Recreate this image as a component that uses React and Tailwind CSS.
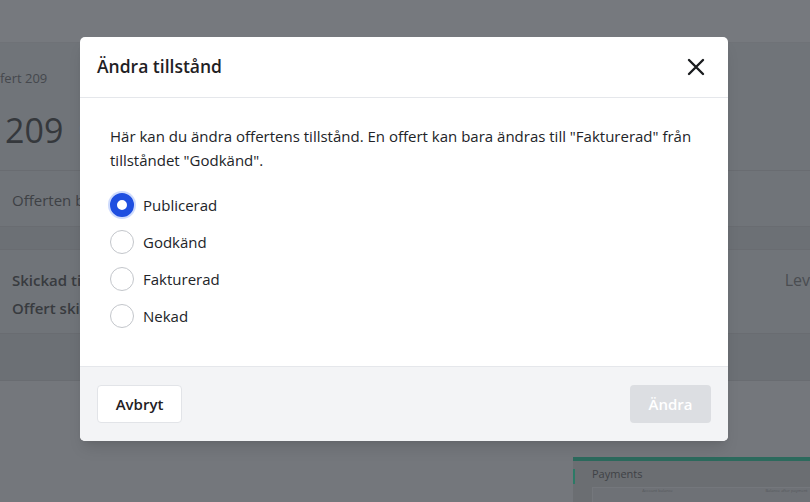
import React, { useState } from 'react';

const options = ['Publicerad', 'Godkänd', 'Fakturerad', 'Nekad'];

function Radio({ checked }) {
  return checked ? (
    <span className="w-6 h-6 rounded-full border-[7px] border-[#1f4fe0] bg-white shadow-[0_0_0_2px_rgba(59,110,246,0.25)] shrink-0" />
  ) : (
    <span className="w-6 h-6 rounded-full border-[1.5px] border-[#c3c6cb] bg-white shrink-0" />
  );
}

export default function App() {
  const [state, setState] = useState('Publicerad');

  return (
    <div className="relative w-[810px] h-[502px] overflow-hidden bg-[#74777c] font-['Open_Sans',sans-serif]">
      {/* dimmed page behind */}
      <div className="h-[43px] bg-[#76797e] border-b border-[#6f7277]" />
      <div className="bg-[#707479]">
        <div className="h-[128px] border-b border-[#696c71] pt-[26px]">
          <p className="w-[80px] overflow-hidden whitespace-nowrap text-[13px] text-[#45484d]">fert 209</p>
          <div className="flex items-center mt-[20px] ml-[5px] gap-4">
            <span className="text-[34px] leading-[42px] text-[#35383c]">209</span>
            <span className="w-6 h-6 rounded-full bg-[#6d7684]" />
          </div>
        </div>
        <div className="h-[56px] border-b border-[#696c71] flex items-center px-3 pt-[3px]">
          <span className="whitespace-nowrap text-[15px] text-[#3e4145]">Offerten b</span>
        </div>
        <div className="h-[23px] bg-[#6c7075] border-b border-[#696c71]" />
        <div className="h-[84px] border-b border-[#696c71] pt-[16px] pl-3 flex justify-between">
          <div className="flex flex-col whitespace-nowrap">
            <span className="text-[15px] leading-[28px] font-semibold text-[#383b3f]">Skickad ti</span>
            <span className="text-[15px] leading-[28px] font-semibold text-[#383b3f]">Offert ski</span>
          </div>
          <span className="whitespace-nowrap text-[16px] leading-[28px] text-[#4a4d51]">Lev</span>
        </div>
        <div className="h-[47px] bg-[#6c7075] border-b border-[#696c71]" />
      </div>
      <div className="bg-[#74777c] pt-[76px] pl-[573px]">
        <div className="w-[300px] h-[60px] bg-[#6b6e72] border-t-[4px] border-[#2c6a5d] flex">
          <span className="w-[2px] h-[15px] mt-[8px] bg-[#2c7a66]" />
          <div className="pl-[17px] pt-[5px]">
            <p className="text-[11px] text-[#3f4246]">Payments</p>
            <div className="mt-[4px] w-[260px] h-[20px] border border-[#74777c] bg-[#6e7176] flex text-[4px] text-[#55585c]">
              <span className="w-1/2 text-center">Account balance</span>
              <span className="w-1/2 text-center">Balance after payment</span>
            </div>
          </div>
        </div>
      </div>

      {/* modal */}
      <div className="absolute left-[80px] top-[37px] w-[648px] bg-white rounded-[5px] overflow-hidden shadow-lg">
        <div className="h-[61px] flex items-center justify-between px-[17px] border-b border-[#e5e7eb]">
          <h2 className="text-[17.5px] font-semibold text-[#1f2124] -mt-[1px]">Ändra tillstånd</h2>
          <button className="w-8 h-8 flex items-center justify-center mr-[-1px] text-[#1a1c1f]">
            <svg width="18" height="18" viewBox="0 0 18 18" fill="none" stroke="currentColor" strokeWidth="2.4" strokeLinecap="round">
              <path d="M2 2 L16 16 M16 2 L2 16" />
            </svg>
          </button>
        </div>
        <div className="px-[30px] pt-[26px] h-[269px] border-b border-[#e5e7eb]">
          <p className="text-[15px] leading-[24px] text-[#222428]">
            Här kan du ändra offertens tillstånd. En offert kan bara ändras till "Fakturerad" från tillståndet "Godkänd".
          </p>
          <div className="mt-[21px] flex flex-col gap-[13px]">
            {options.map((o) => (
              <label key={o} className="flex items-center gap-[9px] cursor-pointer" onClick={() => setState(o)}>
                <Radio checked={state === o} />
                <span className="text-[15px] text-[#222428]">{o}</span>
              </label>
            ))}
          </div>
        </div>
        <div className="h-[74px] bg-[#f3f4f6] flex items-center justify-between px-[17px]">
          <button className="h-[38px] w-[85px] bg-white border border-[#e2e4e8] rounded-[4px] text-[15px] font-semibold text-[#1f2124]">
            Avbryt
          </button>
          <button className="h-[38px] w-[81px] bg-[#dcdee2] rounded-[4px] text-[15px] font-semibold text-white">
            Ändra
          </button>
        </div>
      </div>
    </div>
  );
}
